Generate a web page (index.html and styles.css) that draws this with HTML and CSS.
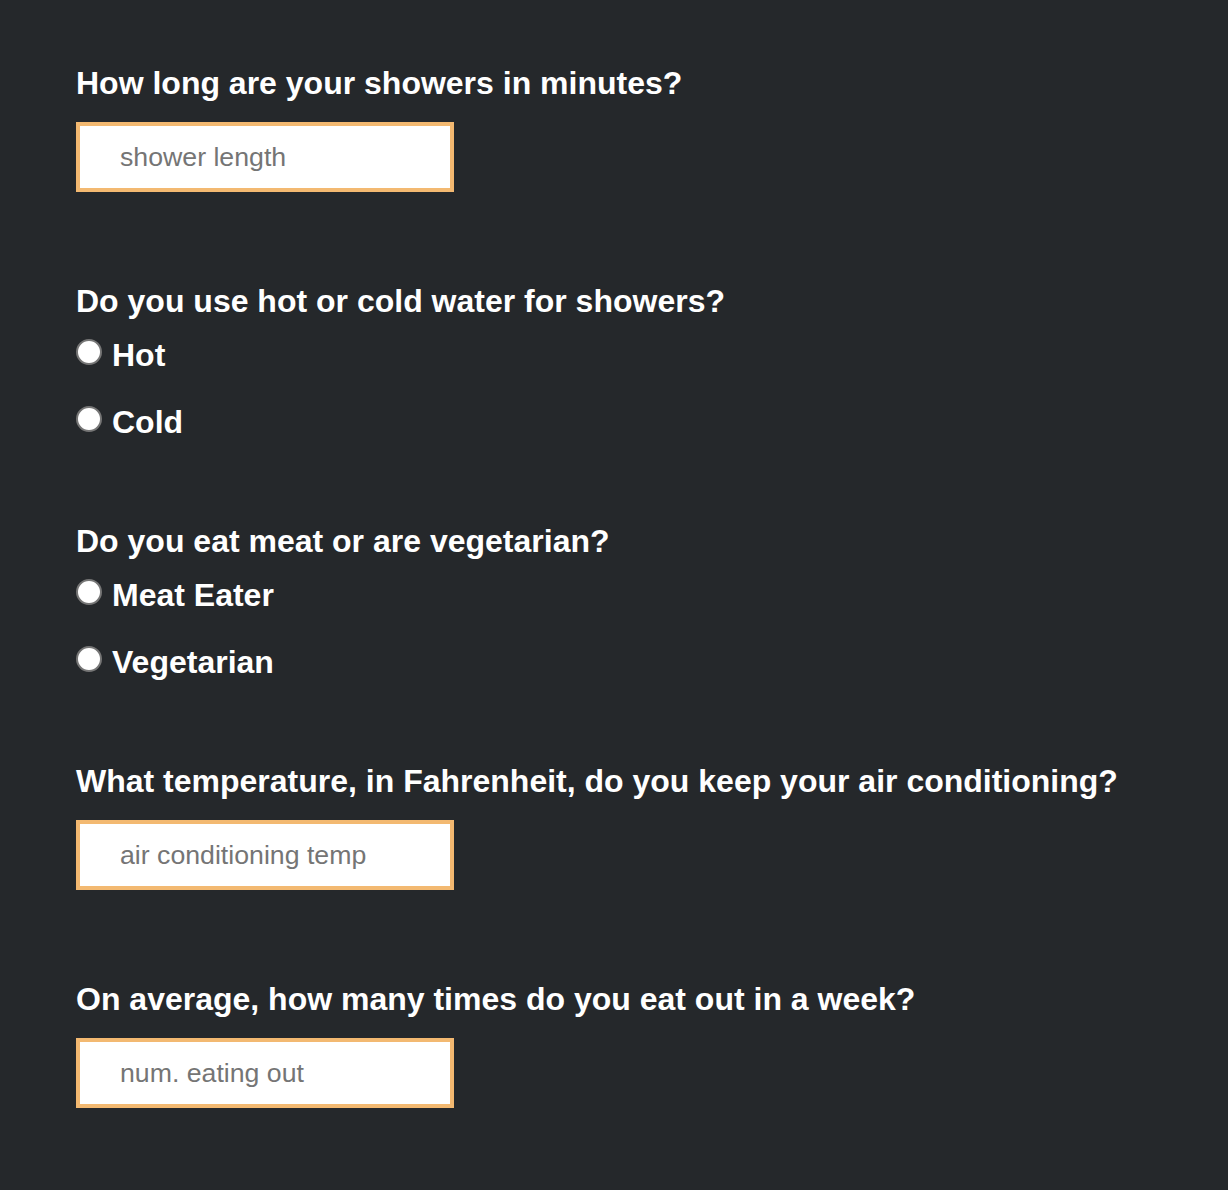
FILE: index.html
```html
<!DOCTYPE html>
<html>
<head>
<meta charset="utf-8">
<link rel="stylesheet" href="styles.css">
</head>
<body>
<form class="survey">
  <section class="q q-text">
    <h2 class="q-title">How long are your showers in minutes?</h2>
    <input class="q-input" type="text" placeholder="shower length">
  </section>
  <section class="q q-radio">
    <h2 class="q-title">Do you use hot or cold water for showers?</h2>
    <label class="opt"><input class="radio" type="radio" name="water"><span>Hot</span></label>
    <label class="opt"><input class="radio" type="radio" name="water"><span>Cold</span></label>
  </section>
  <section class="q q-radio">
    <h2 class="q-title">Do you eat meat or are vegetarian?</h2>
    <label class="opt"><input class="radio" type="radio" name="diet"><span>Meat Eater</span></label>
    <label class="opt"><input class="radio" type="radio" name="diet"><span>Vegetarian</span></label>
  </section>
  <section class="q q-text">
    <h2 class="q-title">What temperature, in Fahrenheit, do you keep your air conditioning?</h2>
    <input class="q-input" type="text" placeholder="air conditioning temp">
  </section>
  <section class="q q-text">
    <h2 class="q-title">On average, how many times do you eat out in a week?</h2>
    <input class="q-input" type="text" placeholder="num. eating out">
  </section>
</form>
</body>
</html>
```
FILE: styles.css
```css
html, body {
  margin: 0;
  padding: 0;
  background: #25282b;
  height: 100%;
}
body {
  font-family: "Liberation Sans", Arial, sans-serif;
  color: #ffffff;
}
.survey {
  display: flex;
  flex-direction: column;
  padding: 65px 76px 0;
}
.q {
  display: flex;
  flex-direction: column;
  align-items: flex-start;
}
.q-text { margin-bottom: 91px; }
.q-radio { margin-bottom: 84px; }
.q-title {
  margin: 0;
  font-size: 32px;
  line-height: 36px;
  font-weight: bold;
  white-space: nowrap;
}
.q-text .q-title { margin-bottom: 21px; }
.q-radio .q-title { margin-bottom: 17px; }
.q-input {
  box-sizing: border-box;
  width: 378px;
  height: 70px;
  border: 4px solid #f3b971;
  background: #ffffff;
  padding: 0 0 0 40px;
  margin: 0;
  font-family: "Liberation Sans", Arial, sans-serif;
  font-size: 26.7px;
  color: #333;
  outline: none;
  border-radius: 0;
}
.q-input::placeholder { color: #757575; }
.opt {
  display: flex;
  align-items: center;
  font-size: 32px;
  line-height: 36px;
  font-weight: bold;
  margin-bottom: 31px;
  position: relative;
  top: 1px;
}
.opt:last-child { margin-bottom: 0; }
.radio {
  appearance: none;
  -webkit-appearance: none;
  box-sizing: border-box;
  width: 26px;
  height: 26px;
  margin: 0 10px 0 0;
  border-radius: 50%;
  border: 2px solid #767676;
  background: #ffffff;
  position: relative;
  top: -3px;
}
```
